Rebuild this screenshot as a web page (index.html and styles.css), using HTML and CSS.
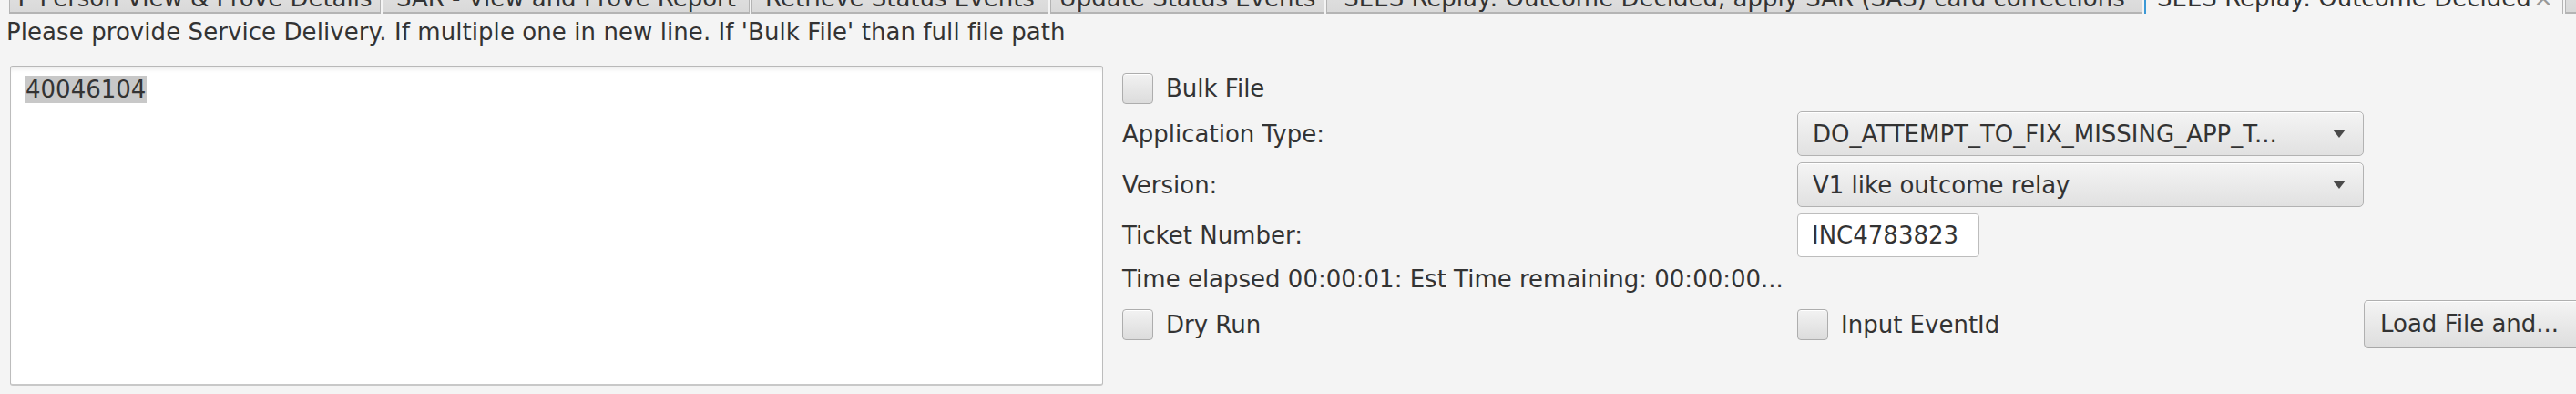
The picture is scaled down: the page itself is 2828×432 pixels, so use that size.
FILE: index.html
```html
<!DOCTYPE html>
<html>
<head>
<meta charset="utf-8">
<link rel="stylesheet" href="styles.css">
</head>
<body>
<div class="tabs">
  <div class="tab t1">P Person View &amp; Prove Details</div>
  <div class="tab t2">SAR - View and Prove Report</div>
  <div class="tab t3">Retrieve Status Events</div>
  <div class="tab t4">Update Status Events</div>
  <div class="tab t5">SEES Replay: Outcome Decided, apply SAR (SAS) card corrections</div>
  <div class="tab t6 active"><span>SEES Replay: Outcome Decided</span><span class="close">×</span></div>
  <div class="tab t7">More</div>
</div>
<div class="hint">Please provide Service Delivery. If multiple one in new line. If 'Bulk File' than full file path</div>
<div class="main">
  <div class="textarea"><span class="sel">40046104</span></div>
  <div class="form">
    <div class="check span3"><span class="box"></span><span>Bulk File</span></div>
    <div class="label">Application Type:</div>
    <div class="combo"><span>DO_ATTEMPT_TO_FIX_MISSING_APP_T...</span><span class="arrow"></span></div>
    <div class="empty"></div>
    <div class="label">Version:</div>
    <div class="combo"><span>V1 like outcome relay</span><span class="arrow"></span></div>
    <div class="empty"></div>
    <div class="label">Ticket Number:</div>
    <div class="fieldcell"><div class="field">INC4783823</div></div>
    <div class="empty"></div>
    <div class="label">Time elapsed 00:00:01: Est Time remaining: 00:00:00...</div>
    <div class="empty"></div>
    <div class="empty"></div>
    <div class="check"><span class="box"></span><span>Dry Run</span></div>
    <div class="check"><span class="box"></span><span>Input EventId</span></div>
    <div class="btncell"><div class="button">Load File and...</div></div>
  </div>
</div>
</body>
</html>
```
FILE: styles.css
```css
html, body {
  margin: 0;
  padding: 0;
}
body {
  background: #f4f4f4;
  font-family: "DejaVu Sans", sans-serif;
  font-size: 26px;
  color: #333;
  width: 2828px;
  height: 432px;
  overflow: hidden;
}
.tabs {
  display: flex;
  align-items: flex-end;
  height: 15px;
  overflow: hidden;
  padding-left: 10px;
  white-space: nowrap;
}
.tab {
  flex: none;
  box-sizing: border-box;
  height: 44px;
  padding: 0;
  margin-right: 2px;
  border: 1px solid #b4b4b4;
  border-bottom: 2px solid #b4b4b4;
  border-radius: 5px 5px 0 0;
  background: linear-gradient(#e6e6e6, #d9d9d9);
  display: flex;
  align-items: flex-end;
  justify-content: center;
  line-height: 30px;
  color: #333;
  overflow: hidden;
}
.t1 { width: 408px; }
.t2 { width: 403px; }
.t3 { width: 326px; }
.t4 { width: 301px; }
.t5 { width: 896px; }
.t6 { width: 460px; }
.t7 { width: 200px; }
.tab.active {
  background: #f4f4f4;
  border-bottom: none;
  border-left: 2px solid #3b99d6;
  padding-bottom: 2px;
  justify-content: space-between;
  padding-left: 12px;
  padding-right: 10px;
}
.close {
  color: #999;
}
.hint {
  padding-left: 7px;
  height: 40px;
  line-height: 40px;
  letter-spacing: 0.07px;
}
.main {
  display: flex;
  align-items: flex-start;
  margin-top: 17px;
}
.textarea {
  flex: none;
  box-sizing: border-box;
  margin-left: 11px;
  width: 1200px;
  height: 351px;
  background: #fff;
  border: 1px solid #bcbcbc;
  border-bottom: 2px solid #c8c8c8;
  border-top: 2px solid #b8b8b8;
  border-radius: 3px;
  box-shadow: inset 0 4px 4px -2px rgba(0,0,0,0.08);
  padding: 9px 0 0 15px;
  line-height: 31px;
}
.sel {
  background: #c8c8c8;
  color: #333;
  padding: 0 1px;
}
.form {
  flex: none;
  margin-left: 21px;
  padding-top: 7px;
  display: grid;
  grid-template-columns: 741px 622px 260px;
  grid-template-rows: 36px 49px 49px 48px 33px 53px;
  row-gap: 7px;
  align-items: center;
}
.span3 {
  grid-column: 1 / span 3;
}
.check {
  display: flex;
  align-items: center;
  gap: 14px;
}
.box {
  box-sizing: border-box;
  width: 34px;
  height: 34px;
  border: 1px solid #adadad;
  border-radius: 4px;
  background: linear-gradient(#f2f2f2, #dcdcdc);
  box-shadow: inset 0 1px 0 #fff;
}
.label {
  white-space: nowrap;
}
.combo {
  box-sizing: border-box;
  height: 49px;
  border: 1px solid #b2b2b2;
  border-radius: 5px;
  background: linear-gradient(#f4f4f4, #e1e1e1);
  box-shadow: inset 0 1px 0 #fff;
  display: flex;
  align-items: center;
  justify-content: space-between;
  padding: 0 19px 0 16px;
  white-space: nowrap;
}
.arrow {
  width: 0;
  height: 0;
  border-left: 7px solid transparent;
  border-right: 7px solid transparent;
  border-top: 9px solid #4a4a4a;
}
.fieldcell {
  height: 48px;
}
.field {
  box-sizing: border-box;
  width: 200px;
  height: 48px;
  background: #fff;
  border: 1px solid #bdbdbd;
  border-radius: 4px;
  display: flex;
  align-items: center;
  padding-left: 15px;
}
.btncell {
  height: 53px;
}
.button {
  box-sizing: border-box;
  height: 53px;
  border: 1px solid #b0b0b0;
  border-bottom: 2px solid #a8a8a8;
  border-radius: 5px;
  background: linear-gradient(#f4f4f4, #dedede);
  box-shadow: inset 0 1px 0 #fff;
  display: flex;
  align-items: center;
  padding: 0 16px 0 17px;
  white-space: nowrap;
  width: 260px;
}
```
